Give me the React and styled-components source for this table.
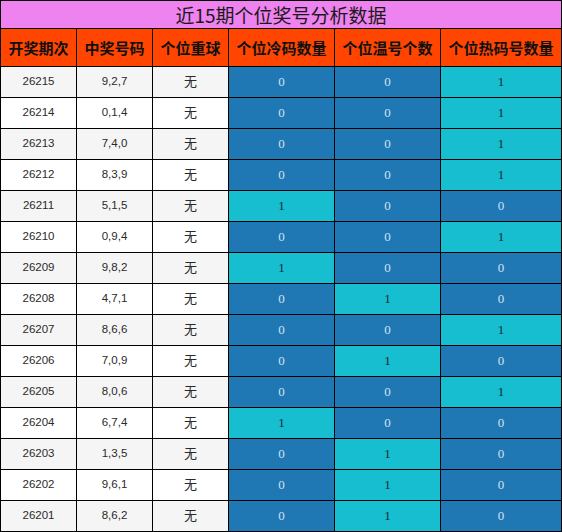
import React from 'react'
import styled, { createGlobalStyle } from 'styled-components'

const GlobalStyle = createGlobalStyle`
	html, body {
		margin: 0;
		padding: 0;
		background: #fff;
	}
`

const rows = [
	['26215', '9,2,7', 0, 0, 1],
	['26214', '0,1,4', 0, 0, 1],
	['26213', '7,4,0', 0, 0, 1],
	['26212', '8,3,9', 0, 0, 1],
	['26211', '5,1,5', 1, 0, 0],
	['26210', '0,9,4', 0, 0, 1],
	['26209', '9,8,2', 1, 0, 0],
	['26208', '4,7,1', 0, 1, 0],
	['26207', '8,6,6', 0, 0, 1],
	['26206', '7,0,9', 0, 1, 0],
	['26205', '8,0,6', 0, 0, 1],
	['26204', '6,7,4', 1, 0, 0],
	['26203', '1,3,5', 0, 1, 0],
	['26202', '9,6,1', 0, 1, 0],
	['26201', '8,6,2', 0, 1, 0]
]

const headers = ['开奖期次', '中奖号码', '个位重球', '个位冷码数量', '个位温号个数', '个位热码号数量']

const Grid = styled.div`
	display: grid;
	grid-template-columns: 75px 75px 75px 105px 105px 120px;
	grid-template-rows: 27px 37px repeat(15, 30px);
	gap: 1px;
	padding: 1px;
	width: 562px;
	box-sizing: border-box;
	background: #000;
`

const Title = styled.div`
	grid-column: 1 / -1;
	background: #ee82ee;
	color: #1a1a1a;
	font-family: 'Noto Sans CJK SC', sans-serif;
	font-size: 19px;
	display: flex;
	align-items: center;
	justify-content: center;
	line-height: 1;
`

const Head = styled.div`
	background: #ff4500;
	color: #111;
	font-family: 'Noto Sans CJK SC', sans-serif;
	font-weight: bold;
	font-size: 15px;
	display: flex;
	align-items: center;
	justify-content: center;
	white-space: nowrap;
`

const Cell = styled.div`
	background: ${props => (props.shade ? '#f5f5f5' : '#fff')};
	color: #2a2a2a;
	font-family: ${props => (props.cjk ? "'Noto Sans CJK SC'" : "'Liberation Sans'")}, sans-serif;
	font-size: ${props => (props.cjk ? '13px' : '11.5px')};
	line-height: 1;
	padding-bottom: ${props => (props.cjk ? '3px' : '0')};
	box-sizing: border-box;
	display: flex;
	align-items: center;
	justify-content: center;
`

const Count = styled.div`
	background: ${props => (props.hot ? '#17becf' : '#1f77b4')};
	color: ${props => (props.hot ? '#102a33' : '#cfe3f2')};
	font-family: 'Liberation Serif', serif;
	font-size: 13px;
	display: flex;
	align-items: center;
	justify-content: center;
`

export default function App() {
	return (
		<>
			<GlobalStyle />
			<Grid>
				<Title>近15期个位奖号分析数据</Title>
				{headers.map(h => (
					<Head key={h}>{h}</Head>
				))}
				{rows.map(([issue, nums, cold, warm, hot], i) => (
					<React.Fragment key={issue}>
						<Cell shade={i % 2 === 0}>{issue}</Cell>
						<Cell shade={i % 2 === 0}>{nums}</Cell>
						<Cell shade={i % 2 === 0} cjk>
							无
						</Cell>
						<Count hot={cold === 1}>{cold}</Count>
						<Count hot={warm === 1}>{warm}</Count>
						<Count hot={hot === 1}>{hot}</Count>
					</React.Fragment>
				))}
			</Grid>
		</>
	)
}
